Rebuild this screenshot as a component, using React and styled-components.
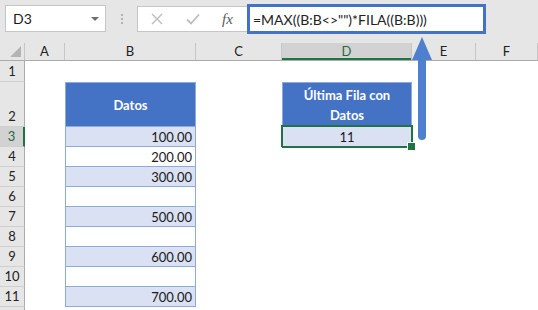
import React from "react";
import styled, { createGlobalStyle } from "styled-components";

const GlobalStyle = createGlobalStyle`
  html, body {
    margin: 0;
    padding: 0;
    background: #fff;
  }
  * {
    box-sizing: border-box;
  }
`;

const COLS = [
  { key: "A", w: 40 },
  { key: "B", w: 131 },
  { key: "C", w: 86 },
  { key: "D", w: 130 },
  { key: "E", w: 64 },
  { key: "F", w: 62 },
];

const Sheet = styled.div`
  position: relative;
  width: 538px;
  height: 310px;
  overflow: hidden;
  font-family: Lato, "Open Sans", sans-serif;
  color: #1a1a1a;
  background: #fff;
`;

const Toolbar = styled.div`
  display: flex;
  align-items: flex-start;
  height: 38px;
  padding: 5px 0 0 5px;
  background: #e6e6e6;
`;

const NameBox = styled.div`
  display: flex;
  align-items: center;
  justify-content: space-between;
  width: 101px;
  height: 27px;
  padding: 0 6px 0 7px;
  background: #fff;
  border: 1px solid #c6c6c6;
  font-size: 14px;
`;

const Caret = styled.span`
  width: 0;
  height: 0;
  border-left: 4px solid transparent;
  border-right: 4px solid transparent;
  border-top: 4px solid #6e6e6e;
`;

const Dots = styled.div`
  display: flex;
  flex-direction: column;
  align-items: center;
  justify-content: center;
  gap: 2px;
  width: 31px;
  height: 27px;

  span {
    width: 2px;
    height: 2px;
    background: #b3b3b3;
  }
`;

const FxArea = styled.div`
  display: flex;
  align-items: center;
  width: 110px;
  height: 26px;
  margin-top: 1px;
  padding-left: 13px;
  gap: 23px;
  background: #fff;
  border: 1px solid #c6c6c6;
  border-right: none;
`;

const Fx = styled.span`
  font-family: "Liberation Serif", serif;
  font-style: italic;
  font-size: 15px;
  color: #5a5a5a;
  margin-left: -1px;
`;

const FormulaBox = styled.div`
  display: flex;
  align-items: center;
  width: 239px;
  height: 30px;
  margin-top: -1px;
  padding-left: 3px;
  background: #fff;
  border: 3px solid #4472c4;
  font-size: 14px;
  color: #222;
  white-space: nowrap;
`;

const HeaderRow = styled.div`
  display: flex;
  align-items: flex-end;
  height: 23px;
  background: #e6e6e6;
  border-bottom: 1px solid #ababab;
`;

const Corner = styled.div`
  position: relative;
  width: 25px;
  height: 17px;
  border-right: 1px solid #c6c6c6;

  &::after {
    content: "";
    position: absolute;
    right: 3px;
    bottom: 3px;
    width: 0;
    height: 0;
    border-left: 11px solid transparent;
    border-bottom: 11px solid #b4b4b4;
  }
`;

const ColHead = styled.div`
  width: ${(p) => p.$w}px;
  height: 17px;
  line-height: 17px;
  text-align: center;
  font-size: 13px;
  color: ${(p) => (p.$active ? "#1e6b3f" : "#222")};
  background: ${(p) => (p.$active ? "#d2d2d2" : "transparent")};
  border-right: 1px solid #c6c6c6;
  box-shadow: ${(p) => (p.$active ? "inset 0 -2px 0 #217346" : "none")};
`;

const Row = styled.div`
  display: flex;
  height: ${(p) => p.$h}px;
`;

const RowHead = styled.div`
  display: flex;
  align-items: flex-end;
  justify-content: center;
  width: 25px;
  padding-bottom: 2px;
  font-size: 13px;
  color: ${(p) => (p.$active ? "#1e6b3f" : "#222")};
  background: ${(p) => (p.$active ? "#d2d2d2" : "#e6e6e6")};
  border-right: ${(p) => (p.$active ? "2px solid #217346" : "1px solid #ababab")};
  border-bottom: 1px solid #cfcfcf;
`;

const Cell = styled.div`
  position: relative;
  display: flex;
  align-items: center;
  justify-content: ${(p) => p.$align || "flex-end"};
  width: ${(p) => p.$w}px;
  padding: 0 3px;
  font-size: 13px;
  background: ${(p) => p.$bg || "#fff"};
  ${(p) =>
    p.$bordered &&
    `
    border-left: 1px solid #8ea9db;
    border-right: 1px solid #8ea9db;
    border-bottom: 1px solid #8ea9db;
  `}
  ${(p) => p.$top && "border-top: 1px solid #8ea9db;"}
`;

const HeadCell = styled(Cell)`
  justify-content: center;
  text-align: center;
  color: #fff;
  font-weight: 700;
  line-height: 20px;
  background: #4472c4;
  padding: 0 14px;
`;

const Selection = styled.div`
  position: absolute;
  left: -2px;
  right: -2px;
  top: -2px;
  bottom: -2px;
  border: 2px solid #217346;

  &::after {
    content: "";
    position: absolute;
    right: -5px;
    bottom: -5px;
    width: 7px;
    height: 7px;
    background: #217346;
    border: 1px solid #fff;
  }
`;

const Arrow = styled.svg`
  position: absolute;
  left: 410px;
  top: 35px;
`;

const data = {
  3: "100.00",
  4: "200.00",
  5: "300.00",
  6: "",
  7: "500.00",
  8: "",
  9: "600.00",
  10: "",
  11: "700.00",
};

const Gap = ({ w }) => <Cell $w={w} />;

const App = () => {
  const rows = [3, 4, 5, 6, 7, 8, 9, 10, 11, 12];
  return (
    <Sheet>
      <GlobalStyle />
      <Toolbar>
        <NameBox>
          D3
          <Caret />
        </NameBox>
        <Dots>
          <span />
          <span />
          <span />
        </Dots>
        <FxArea>
          <svg width="12" height="12" viewBox="0 0 12 12">
            <path d="M1 1L11 11M11 1L1 11" stroke="#bdbdbd" strokeWidth="1.4" />
          </svg>
          <svg width="14" height="12" viewBox="0 0 14 12">
            <path d="M1 6.5L5 10.5L13 1.5" stroke="#bdbdbd" strokeWidth="1.8" fill="none" />
          </svg>
          <Fx>fx</Fx>
        </FxArea>
        <FormulaBox>=MAX((B:B&lt;&gt;"")*FILA((B:B)))</FormulaBox>
      </Toolbar>

      <HeaderRow>
        <Corner />
        {COLS.map((c) => (
          <ColHead key={c.key} $w={c.w} $active={c.key === "D"}>
            {c.key}
          </ColHead>
        ))}
      </HeaderRow>

      <Row $h={21}>
        <RowHead>1</RowHead>
      </Row>

      <Row $h={45}>
        <RowHead>2</RowHead>
        <Gap w={40} />
        <HeadCell $w={131} $bordered $top>
          Datos
        </HeadCell>
        <Gap w={86} />
        <HeadCell $w={130} $bordered $top>
          Última Fila con Datos
        </HeadCell>
      </Row>

      {rows.map((r) => {
        const inTable = r <= 11;
        const bg = r % 2 === 1 ? "#d9e1f2" : "#fff";
        return (
          <Row key={r} $h={20}>
            {/* row 12 is cut by the window edge, its number is not visible */}
            <RowHead $active={r === 3}>{inTable ? r : ""}</RowHead>
            <Gap w={40} />
            {inTable ? (
              <Cell $w={131} $bordered $bg={bg}>
                {data[r]}
              </Cell>
            ) : (
              <Gap w={131} />
            )}
            <Gap w={86} />
            {r === 3 && (
              <Cell $w={130} $bordered $bg="#d9e1f2" $align="center">
                11
                <Selection />
              </Cell>
            )}
          </Row>
        );
      })}

      <Arrow width="24" height="108" viewBox="0 0 24 108">
        <path d="M12 2L22 25H2Z" fill="#4f7fcf" />
        <rect x="8" y="20" width="8" height="85" rx="4" fill="#4f7fcf" />
      </Arrow>
    </Sheet>
  );
};

export default App;
